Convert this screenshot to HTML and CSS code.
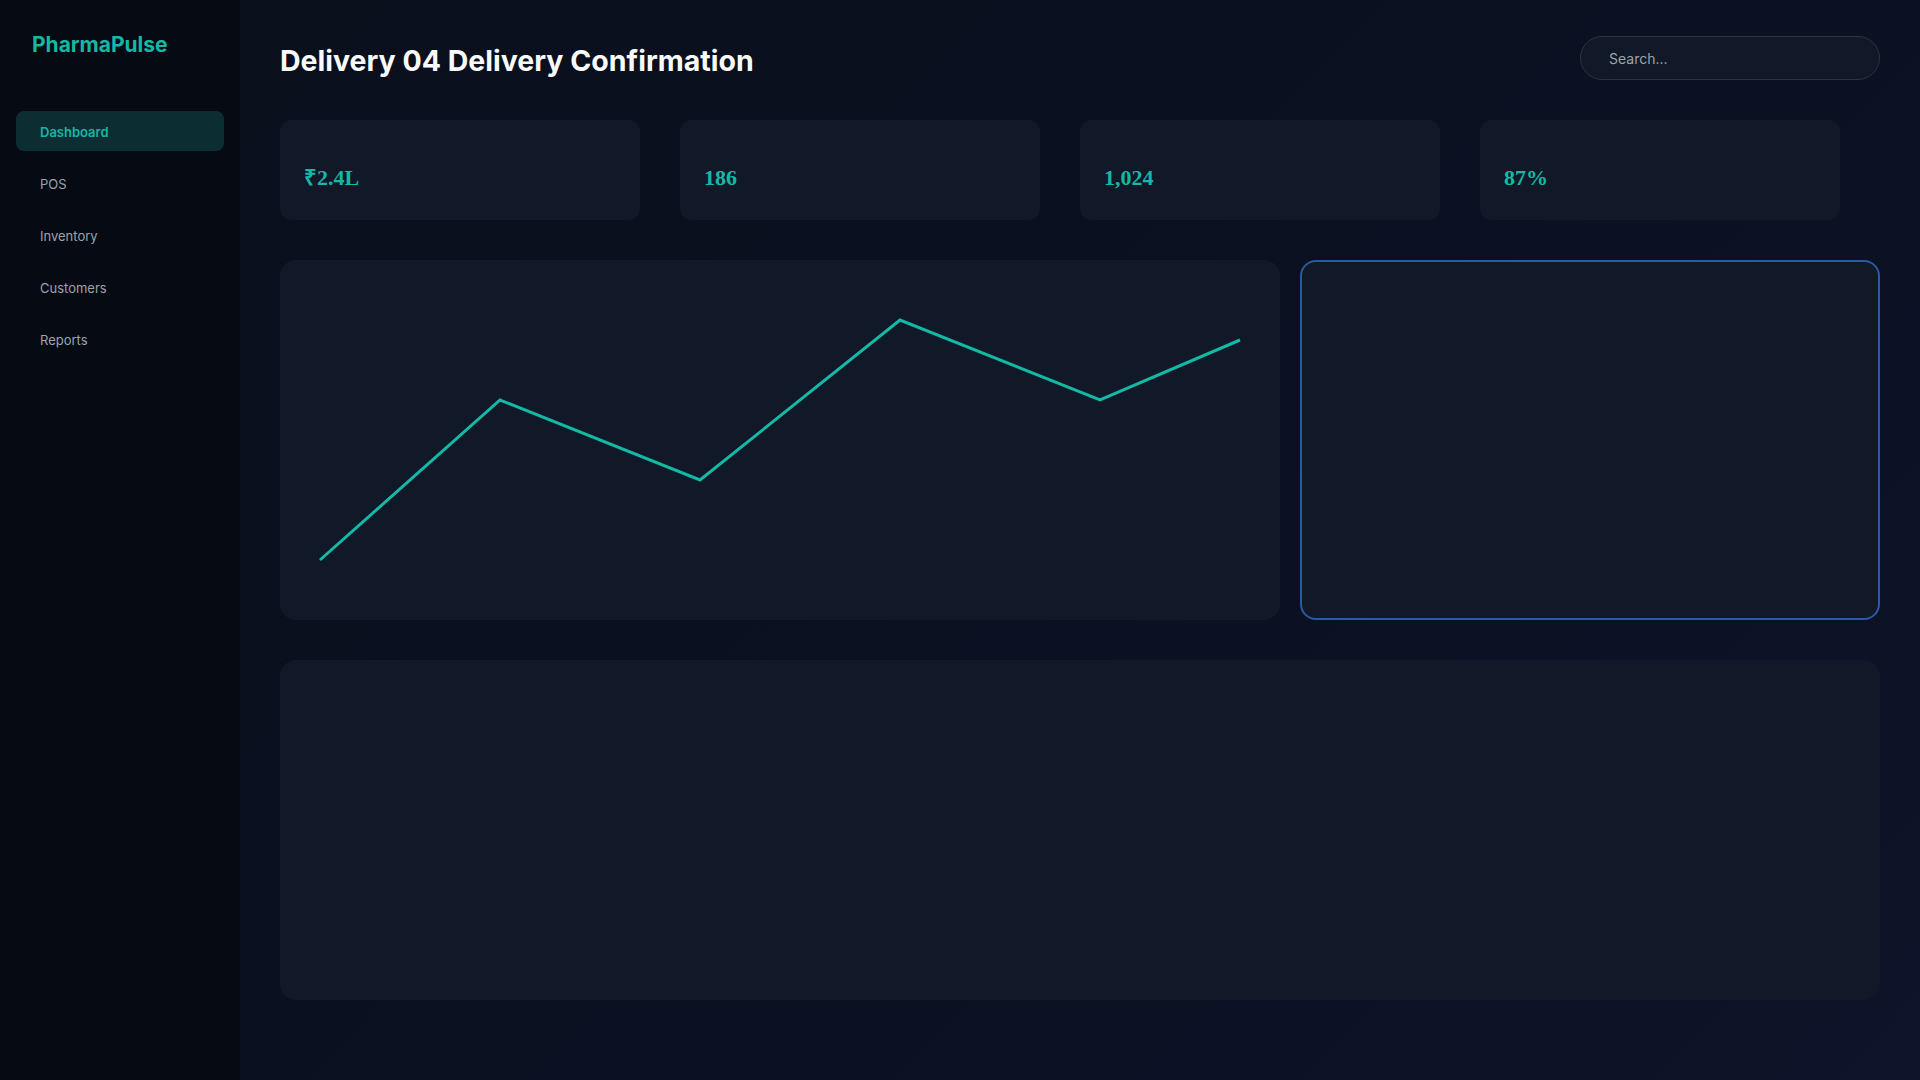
FILE: index.html
```html
<!DOCTYPE html>
<html lang="en">
<head>
  <meta charset="UTF-8" />
  <meta name="viewport" content="width=device-width, initial-scale=1.0" />
  <title>PharmaPulse - Delivery Confirmation</title>
  <link rel="stylesheet" href="styles.css">
</head>
<body>
  <aside class="sidebar">
    <div class="logo">PharmaPulse</div>
    <nav class="nav">
      <a class="nav-item active">Dashboard</a>
      <a class="nav-item">POS</a>
      <a class="nav-item">Inventory</a>
      <a class="nav-item">Customers</a>
      <a class="nav-item">Reports</a>
    </nav>
  </aside>

  <main class="main">
    <header class="header">
      <h1>Delivery 04 Delivery Confirmation</h1>
      <input class="search" type="text" placeholder="Search..." />
    </header>

    <section class="stats">
      <div class="stat"><div class="stat-value">₹2.4L</div></div>
      <div class="stat"><div class="stat-value">186</div></div>
      <div class="stat"><div class="stat-value">1,024</div></div>
      <div class="stat"><div class="stat-value">87%</div></div>
    </section>

    <section class="panels">
      <div class="panel chart">
        <svg width="1000" height="360" viewBox="0 0 1000 360">
          <polyline points="40,300 220,140 420,220 620,60 820,140 960,80" fill="none" stroke="#14b8a6" stroke-width="3" />
        </svg>
      </div>
      <div class="panel focus"></div>
    </section>

    <section class="panel wide"></section>
  </main>
</body>
</html>
```

FILE: styles.css
```css
* {
  box-sizing: border-box;
}
body {
  margin: 0;
  display: flex;
  min-height: 100vh;
  font-family: Inter, "Noto Sans", sans-serif;
  background: #060a12;
  color: #f3f4f6;
}
.sidebar {
  width: 240px;
  flex-shrink: 0;
  background: #060a12;
  padding: 32px 16px;
}
.logo {
  padding-left: 16px;
  font-size: 21px;
  font-weight: 700;
  color: #14b8a6;
  margin-bottom: 54px;
}
.nav {
  display: flex;
  flex-direction: column;
  gap: 12px;
}
.nav-item {
  height: 40px;
  display: flex;
  align-items: center;
  padding: 1px 24px 0;
  border-radius: 8px;
  font-size: 13px;
  color: #9ca3af;
  cursor: pointer;
}
.nav-item.active {
  background: #0c2d32;
  color: #14b8a6;
  font-weight: 600;
}
.main {
  flex: 1;
  padding: 24px 40px;
  background: linear-gradient(135deg, #0a0f1c 0%, #0b1122 55%, #0e1429 100%);
}
.header {
  height: 72px;
  display: flex;
  align-items: center;
  justify-content: space-between;
  margin-bottom: 24px;
}
.header h1 {
  margin: 0;
  font-size: 28.5px;
  font-weight: 700;
  color: #f9fafb;
}
.search {
  width: 300px;
  height: 44px;
  padding: 0 28px;
  border-radius: 22px;
  border: 1px solid #2b3444;
  background: #111827;
  color: #e5e7eb;
  font-family: Inter, "Noto Sans", sans-serif;
  font-size: 14px;
  outline: none;
  margin-top: -4px;
}
.search::placeholder {
  color: #9ca3af;
}
.stats {
  display: grid;
  grid-template-columns: repeat(4, 360px);
  gap: 40px;
}
.stat {
  height: 100px;
  padding: 24px;
  border-radius: 12px;
  background: #111827;
}
.stat-value {
  margin-top: 21px;
  font-family: "Liberation Serif", serif;
  font-size: 22px;
  line-height: 25px;
  font-weight: 700;
  color: #14b8a6;
}
.panels {
  display: grid;
  grid-template-columns: 1000px 1fr;
  gap: 20px;
  margin-top: 40px;
}
.panel {
  background: #111827;
  border-radius: 16px;
}
.chart {
  height: 360px;
  overflow: hidden;
}
.chart svg {
  display: block;
}
.focus {
  height: 360px;
  border: 2px solid #2a59a6;
}
.wide {
  display: block;
  height: 340px;
  margin-top: 40px;
}
```
